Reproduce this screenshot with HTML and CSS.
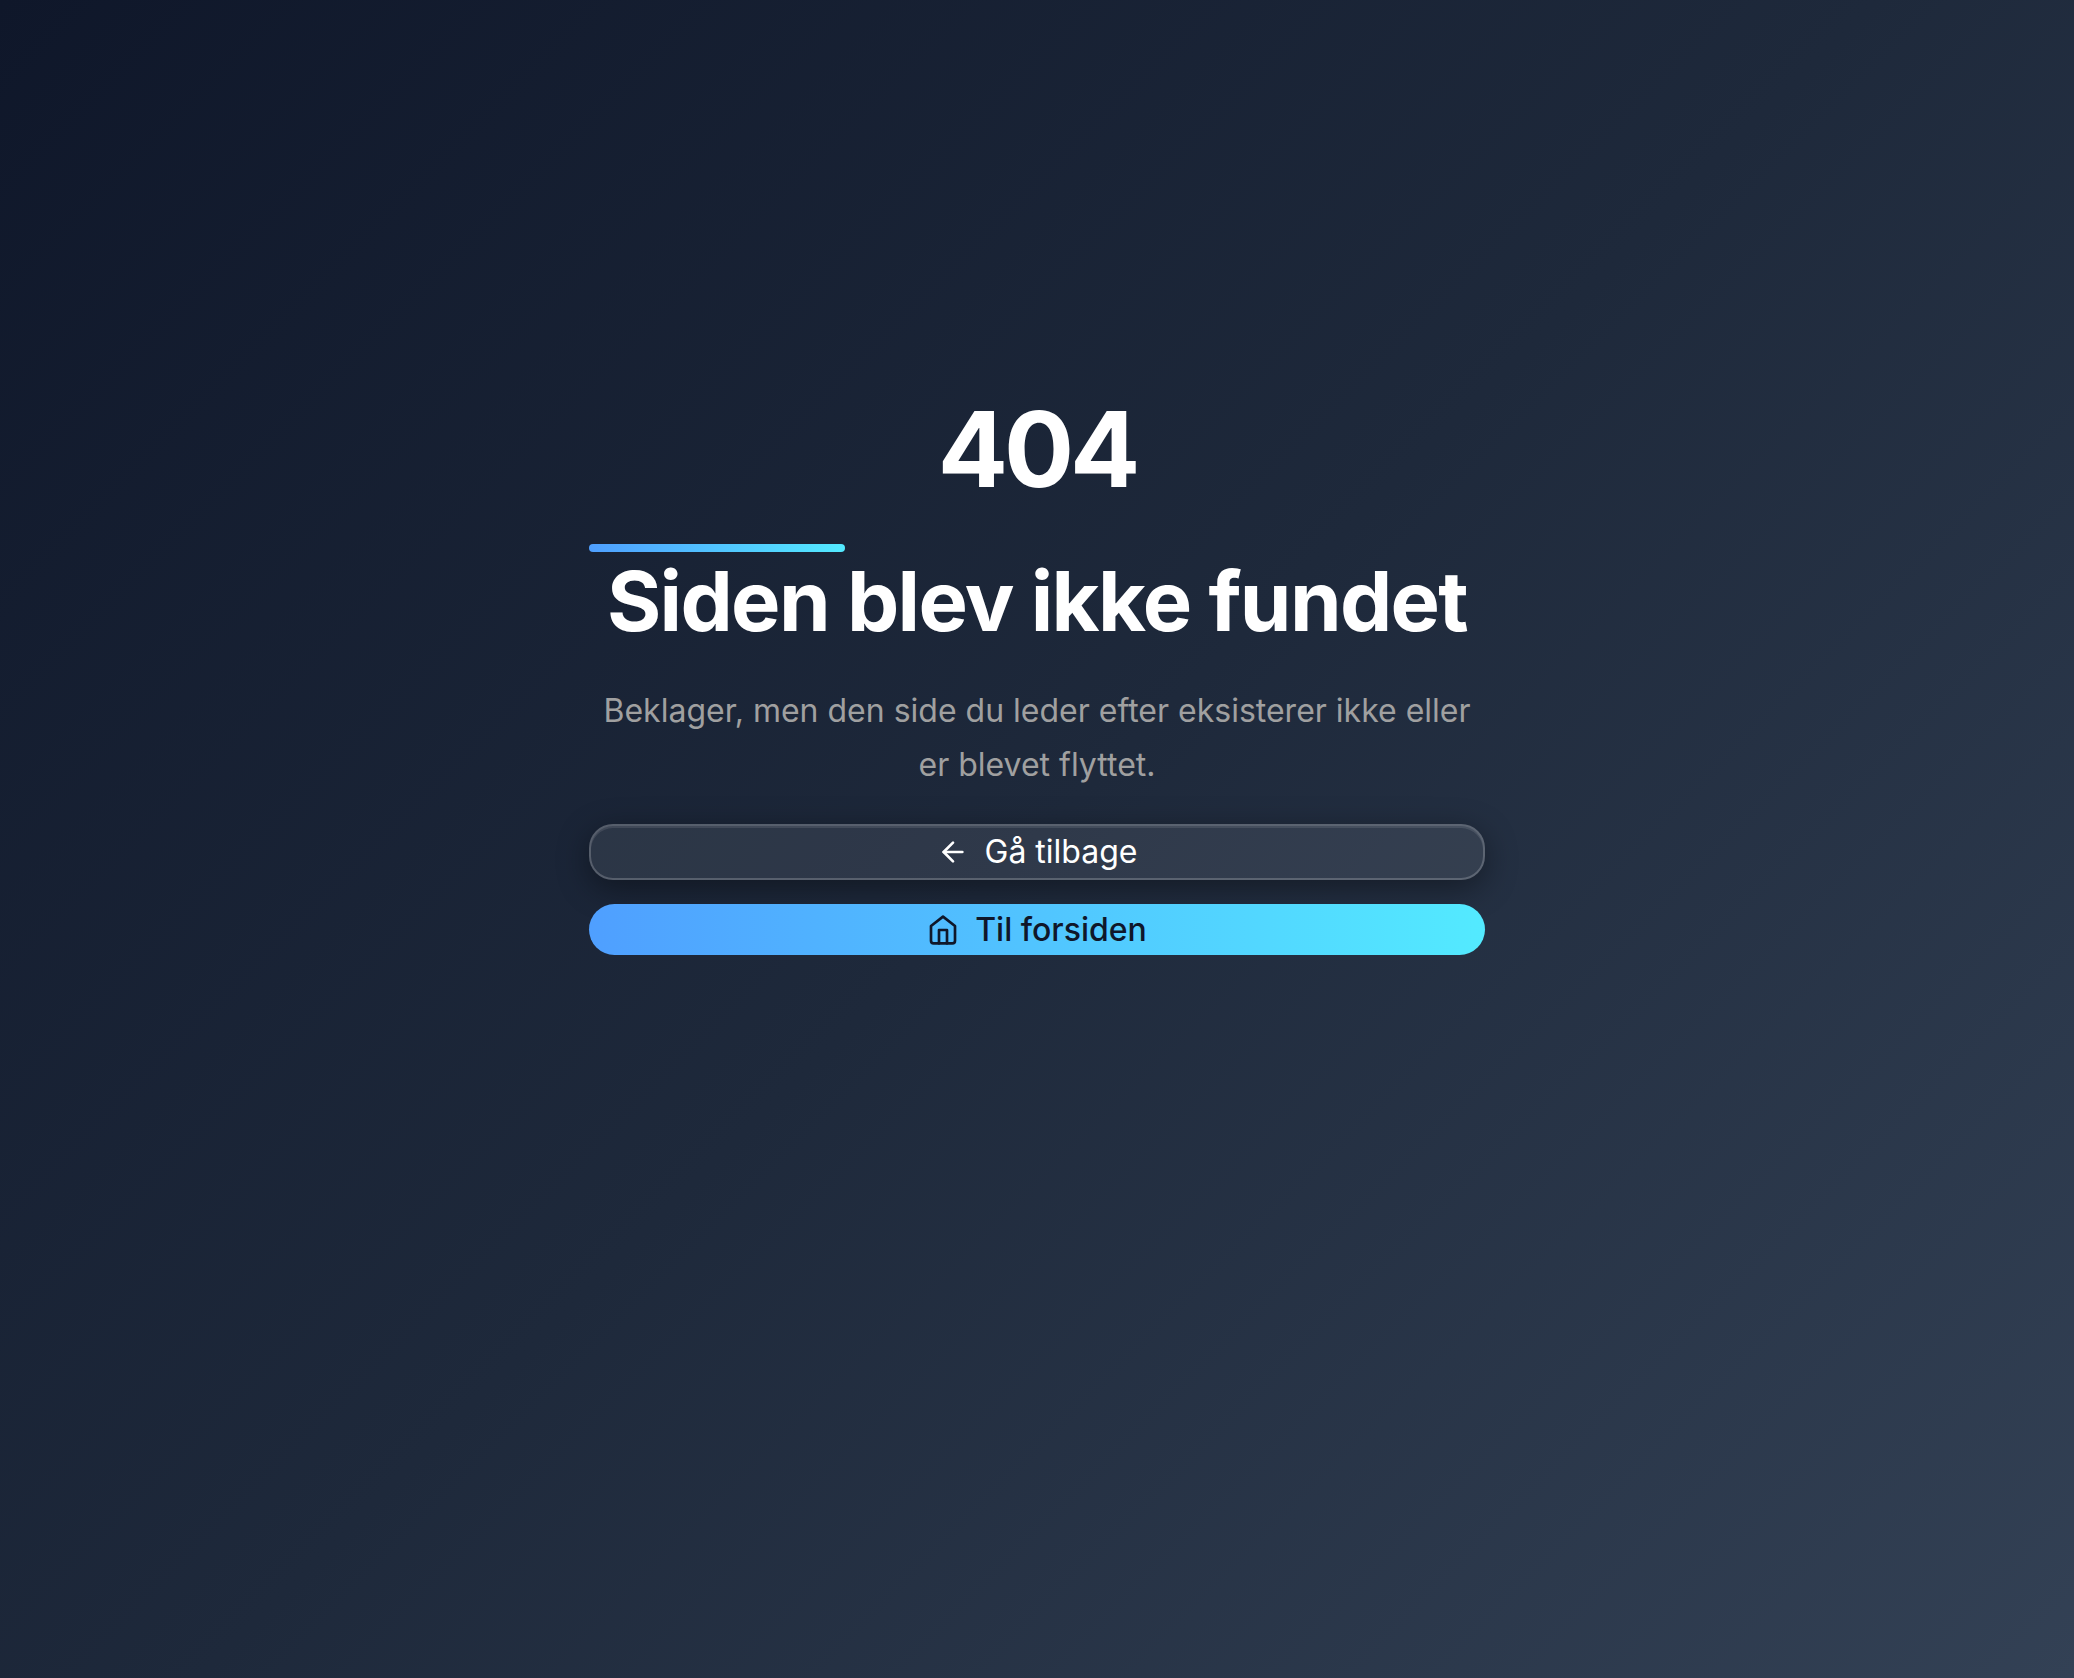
FILE: index.html
```html
<!DOCTYPE html>
<html lang="da">
<head>
  <meta charset="utf-8">
  <meta name="viewport" content="width=device-width, initial-scale=1">
  <title>404 – Siden blev ikke fundet</title>
  <link rel="stylesheet" href="styles.css">
</head>
<body>
  <main class="page">
    <div class="content">
      <h1 class="code">404</h1>
      <div class="accent"></div>
      <h2 class="title">Siden blev ikke fundet</h2>
      <p class="message">Beklager, men den side du leder efter eksisterer ikke eller er blevet flyttet.</p>
      <div class="actions">
        <button class="btn btn-glass" type="button">
          <svg class="icon" viewBox="0 0 24 24" aria-hidden="true"><path d="M12 19l-7-7 7-7"/><path d="M19 12H5"/></svg>
          Gå tilbage
        </button>
        <a class="btn btn-primary" href="/">
          <svg class="icon" viewBox="0 0 24 24" aria-hidden="true"><path d="M3 9l9-7 9 7v11a2 2 0 0 1-2 2H5a2 2 0 0 1-2-2z"/><path d="M9 22V12h6v10"/></svg>
          Til forsiden
        </a>
      </div>
    </div>
  </main>
</body>
</html>
```

FILE: styles.css
```css
* {
  box-sizing: border-box;
}

body {
  margin: 0;
  font-family: Inter, "Liberation Sans", sans-serif;
  font-size: 32px;
  color: #ffffff;
}

.page {
  display: flex;
  justify-content: center;
  min-height: 100vh;
  padding: 393px 32px 32px;
  background: linear-gradient(135deg, #0f172a 0%, #1e293b 50%, #334155 100%);
}

.content {
  width: 100%;
  max-width: 896px;
  text-align: center;
}

.code,
.title {
  margin: 0;
  font-weight: 700;
}

.code {
  font-size: 104px;
  line-height: 112px;
  letter-spacing: -0.04em;
}

.accent {
  width: 256px;
  max-width: 100%;
  height: 8px;
  margin-top: 39px;
  border-radius: 4px;
  background: linear-gradient(90deg, #4f9fff, #53eaff);
}

.title {
  font-size: 83px;
  line-height: 98px;
  letter-spacing: -0.02em;
}

.message {
  margin: 34px 0 32px;
  line-height: 54px;
  color: #a0a0a0;
}

.actions {
  display: flex;
  flex-direction: column;
  gap: 24px;
}

.btn {
  display: flex;
  align-items: center;
  justify-content: center;
  gap: 16px;
  padding: 0;
  border: 0;
  border-radius: 24px;
  font: inherit;
  line-height: 52px;
  text-decoration: none;
  cursor: pointer;
}

.btn-glass {
  border: 2px solid rgba(255, 255, 255, 0.2);
  background: rgba(255, 255, 255, 0.08);
  box-shadow: 0 8px 32px rgba(0, 0, 0, 0.4), inset 0 2px 0 rgba(255, 255, 255, 0.1);
  color: #ffffff;
}

.btn-primary {
  position: relative;
  border-radius: 26px;
  background: linear-gradient(90deg, #4f9fff, #53eaff);
  font-weight: 500;
  line-height: 51px;
  color: #0f172a;
}

.icon {
  width: 32px;
  height: 32px;
  fill: none;
  stroke: currentColor;
  stroke-width: 2;
  stroke-linecap: round;
  stroke-linejoin: round;
}
```
